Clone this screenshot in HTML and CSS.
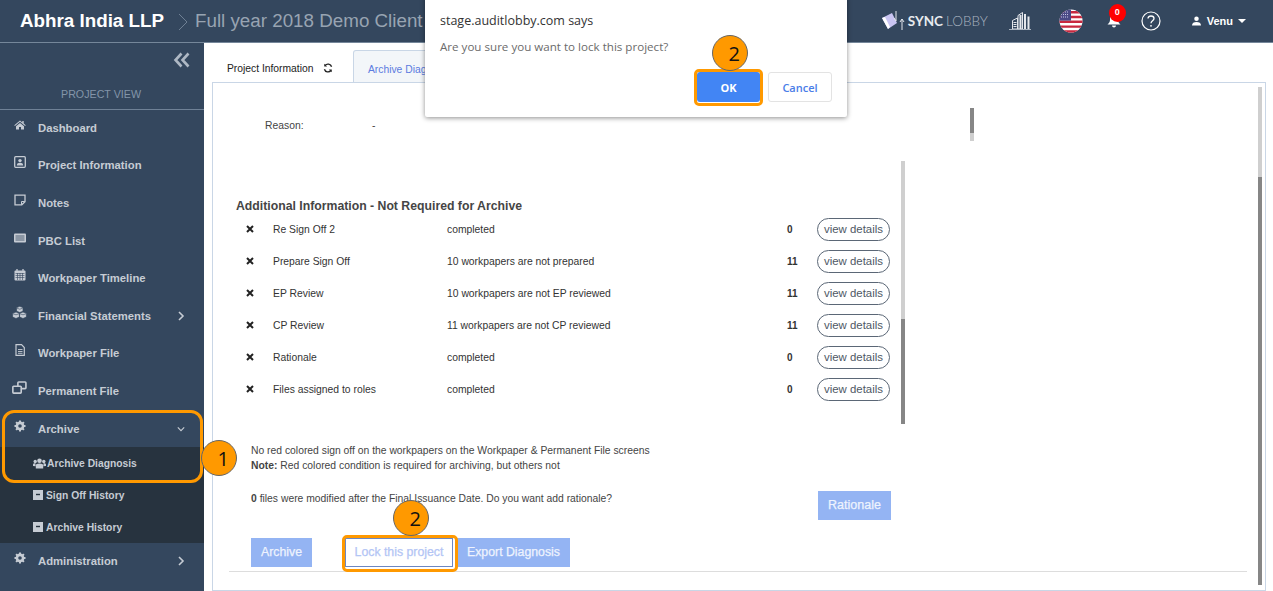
FILE: index.html

```html
<!DOCTYPE html>
<html lang="en">
<head>
    <meta charset="UTF-8">
    <meta name="viewport" content="width=device-width, initial-scale=1.0">
    <title>Archive Diagnosis</title>
    <link rel="stylesheet" href="styles.css">
</head>

<body>

<header class="topbar">
  <span class="org">Abhra India LLP</span>
  <svg class="crumb" viewBox="0 0 10 18"><path d="M1 1l8 8-8 8" fill="none" stroke="#6f8094" stroke-width="1"/></svg>
  <span class="client">Full year 2018 Demo Client</span>

  <div class="tools">
    <div class="sync">
      <svg class="sync-logo" viewBox="0 0 24 20">
        <path d="M1 7l10-5 5 10-9 6z" fill="#c9c4f2"/>
        <path d="M1 7l3-1 5 10-2 2z" fill="#fff"/>
        <path d="M15 0v10M13 7l2 3M21 8v11M19 11l2-3 2 3" fill="none" stroke="#e4e7ec" stroke-width="1"/>
      </svg>
      <span class="sync-a">SYNC</span> <span class="sync-b">LOBBY</span>
    </div>
    <svg class="tower" viewBox="0 0 22 20">
      <path d="M3.500 9.500l5-2.500v11h-5zM9 4.500l4.500-3V18H9z" fill="none" stroke="#e4e7ec" stroke-width="1"/>
      <path d="M10.500 4h2v14h-2zM15 3h2v15h-2zM18.500 5.500h2V18h-2zM4.500 11h3v1h-3zM4.500 13h3v1h-3zM4.500 15h3v1h-3z" fill="#e4e7ec"/>
      <path d="M0 18.500h22" stroke="#aab4c0" stroke-width="1"/>
    </svg>
    <svg class="flag" viewBox="0 0 24 24">
      <defs><clipPath id="round"><circle cx="12" cy="12" r="11.500"/></clipPath></defs>
      <g clip-path="url(#round)">
        <rect width="24" height="24" fill="#fff"/>
        <path d="M0 2h24v2.400H0zM0 6.800h24v2.400H0zM0 11.600h24V14H0zM0 16.400h24v2.400H0zM0 21.200h24V24H0z" fill="#c8283f"/>
        <rect width="12" height="11.600" fill="#4b4a86"/>
        <path d="M2 3h8M2 5.500h8M2 8h8" stroke="#c9c9e4" stroke-width="1" stroke-dasharray="1 1"/>
      </g>
    </svg>
    <div class="bell">
      <svg viewBox="0 0 14 14"><path d="M7 1c3 0 4 2 4 5 0 2 1 3 2.500 4.500H.5C2 9 3 8 3 6c0-3 1-5 4-5zM5 11.500h4c0 1.200-1 2-2 2s-2-.8-2-2z" fill="#fff"/></svg>
      <span class="count">0</span>
    </div>
    <svg class="help" viewBox="0 0 20 20">
      <circle cx="10" cy="10" r="9" fill="none" stroke="#fff" stroke-width="1.200"/>
      <path d="M7 7.600C7 5.800 8.400 5 10 5s3 1 3 2.600c0 2.200-3 2.200-3 4.600" fill="none" stroke="#fff" stroke-width="1.300"/>
      <circle cx="10" cy="14.800" r=".9" fill="#fff"/>
    </svg>
    <div class="user">
      <svg viewBox="0 0 10 11"><circle cx="5" cy="3" r="2.500" fill="#fff"/><path d="M0 10.500c0-3 2-4 5-4s5 1 5 4z" fill="#fff"/></svg>
      <span>Venu</span>
      <i class="caret"></i>
    </div>
  </div>
</header>

<div class="layout">
  <nav class="sidebar">
    <svg class="collapse" viewBox="0 0 18 16"><path d="M8.500 1.500L2.500 8l6 6.500M15.500 1.500L9.500 8l6 6.500" fill="none" stroke="#aeb8c4" stroke-width="2.600"/></svg>
    <div class="view-title">PROJECT VIEW</div>

    <a class="item"><svg class="ico" viewBox="0 0 12 12"><path d="M6 1.500L.3 6.300l.6.700L6 2.800 11.100 7l.6-.7-2-1.700V2H8.300v1.400zM2 7.200l4-3.300 4 3.300v3.300H7V8H5v2.500H2z" fill="#c6ccd4"/></svg>Dashboard</a>
    <a class="item"><svg class="ico" viewBox="0 0 12 12"><rect x=".7" y=".7" width="10.600" height="10.600" rx="1" fill="none" stroke="#c6ccd4" stroke-width="1.300"/><circle cx="6" cy="4.600" r="1.700" fill="#c6ccd4"/><path d="M2.800 9.500c0-2 1.400-2.700 3.200-2.700s3.200.7 3.200 2.700z" fill="#c6ccd4"/></svg>Project Information</a>
    <a class="item"><svg class="ico" viewBox="0 0 12 12"><path d="M1 1.200h10v6.500L7.800 10.800H1z" fill="none" stroke="#c6ccd4" stroke-width="1.300"/><path d="M7.500 10.500V7.500h3.300" fill="none" stroke="#c6ccd4" stroke-width="1"/></svg>Notes</a>
    <a class="item"><svg class="ico" viewBox="0 0 12 12"><rect y="1.500" width="12" height="9" rx="1" fill="#c6ccd4"/><path d="M1.500 4h9M1.500 6h9M1.500 8h9" stroke="#34475e" stroke-width=".8"/></svg>PBC List</a>
    <a class="item"><svg class="ico" viewBox="0 0 12 12"><rect x=".5" y="1.500" width="11" height="10" rx="1" fill="#c6ccd4"/><path d="M3 0v3M9 0v3" stroke="#c6ccd4" stroke-width="1.300"/><path d="M1.500 4.500h9M1.500 6.500h9M1.500 8.500h9M3.500 4v7M6 4v7M8.500 4v7" stroke="#34475e" stroke-width=".6"/></svg>Workpaper Timeline</a>
    <a class="item wide"><svg class="ico" viewBox="0 0 15 13"><path d="M7.800.3l3.200 1.300v3.600L7.800 6.500 4.600 5.200V1.600zM4 6l3.400 1.300v3.800L4 12.500.6 11.100V7.300zM11 6l3.400 1.300v3.800L11 12.500l-3.400-1.400V7.300z" fill="#c6ccd4" stroke="#34475e" stroke-width=".7"/><path d="M5 2.200l2.800 1 2.800-1M1 7.800l3 1 3-1M8 7.800l3 1 3-1" fill="none" stroke="#34475e" stroke-width=".6"/></svg>Financial Statements<svg class="arrow" viewBox="0 0 8 10"><path d="M2 1l4 4-4 4" fill="none" stroke="#c6ccd4" stroke-width="1.600"/></svg></a>
    <a class="item"><svg class="ico" viewBox="0 0 12 12"><path d="M2 .7h5.500L10.300 3.500v7.800H2z" fill="none" stroke="#c6ccd4" stroke-width="1.200"/><path d="M4 5.500h4.500M4 7.500h4.500M4 9.300h4.500" stroke="#c6ccd4" stroke-width=".9"/></svg>Workpaper File</a>
    <a class="item wide"><svg class="ico" viewBox="0 0 14 12"><rect x="5.500" y=".8" width="7.500" height="6.200" rx=".8" fill="none" stroke="#c6ccd4" stroke-width="1.500"/><rect x=".8" y="4.800" width="7.800" height="6.400" rx=".8" fill="#34475e" stroke="#c6ccd4" stroke-width="1.500"/></svg>Permanent File</a>
    <a class="item"><svg class="ico" viewBox="0 0 12 12"><use href="#cog"/></svg>Archive<svg class="arrow" viewBox="0 0 10 8"><path d="M1 2l4 4 4-4" fill="none" stroke="#c6ccd4" stroke-width="1.400"/></svg></a>
    <div class="subnav">
      <a class="sub"><svg class="subico" viewBox="0 0 13 11"><circle cx="6.500" cy="2.800" r="2.300" fill="#c6ccd4"/><circle cx="2.200" cy="3.500" r="1.700" fill="#c6ccd4"/><circle cx="10.800" cy="3.500" r="1.700" fill="#c6ccd4"/><path d="M2.800 10.500V7.500c0-1.300 1-2 3.700-2s3.700.7 3.700 2v3zM0 8V6.500c0-.8.800-1.300 2.500-1.300v3zM13 8V6.500c0-.8-.8-1.300-2.500-1.300v3z" fill="#c6ccd4"/></svg>Archive Diagnosis</a>
      <a class="sub"><svg class="subico square" viewBox="0 0 10 10"><rect width="10" height="10" fill="#c6ccd4"/><path d="M3 4.500h4" stroke="#27333f" stroke-width="1.400"/></svg>Sign Off History</a>
      <a class="sub"><svg class="subico square" viewBox="0 0 10 10"><rect width="10" height="10" fill="#c6ccd4"/><path d="M3 4.500h4" stroke="#27333f" stroke-width="1.400"/></svg>Archive History</a>
    </div>
    <a class="item item-last"><svg class="ico" viewBox="0 0 12 12"><use href="#cog"/></svg>Administration<svg class="arrow" viewBox="0 0 8 10"><path d="M2 1l4 4-4 4" fill="none" stroke="#c6ccd4" stroke-width="1.600"/></svg></a>
  </nav>

  <main class="main">
    <div class="tabs">
      <div class="tab">Project Information
        <svg class="refresh" viewBox="0 0 12 12"><path d="M10.300 4.500A4.500 4.500 0 0 0 2.500 3M1.700 7.500A4.500 4.500 0 0 0 9.500 9" fill="none" stroke="#222" stroke-width="1.700"/><path d="M1.500.8v3.400h3.400zM10.500 11.200V7.800H7.100z" fill="#222"/></svg>
      </div>
      <div class="tab tab-on">Archive Diagnosis</div>
    </div>

    <section class="panel">
      <div class="reason"><span class="reason-label">Reason:</span><span>-</span></div>

      <h4 class="extra-title">Additional Information - Not Required for Archive</h4>

      <div class="checks">
        <div class="check"><svg class="cross" viewBox="0 0 8 8"><path d="M1 1l6 6M7 1L1 7" stroke="#222" stroke-width="2"/></svg><span>Re Sign Off 2</span><span>completed</span><b>0</b><button class="details">view details</button></div>
        <div class="check"><svg class="cross" viewBox="0 0 8 8"><path d="M1 1l6 6M7 1L1 7" stroke="#222" stroke-width="2"/></svg><span>Prepare Sign Off</span><span>10 workpapers are not prepared</span><b>11</b><button class="details">view details</button></div>
        <div class="check"><svg class="cross" viewBox="0 0 8 8"><path d="M1 1l6 6M7 1L1 7" stroke="#222" stroke-width="2"/></svg><span>EP Review</span><span>10 workpapers are not EP reviewed</span><b>11</b><button class="details">view details</button></div>
        <div class="check"><svg class="cross" viewBox="0 0 8 8"><path d="M1 1l6 6M7 1L1 7" stroke="#222" stroke-width="2"/></svg><span>CP Review</span><span>11 workpapers are not CP reviewed</span><b>11</b><button class="details">view details</button></div>
        <div class="check"><svg class="cross" viewBox="0 0 8 8"><path d="M1 1l6 6M7 1L1 7" stroke="#222" stroke-width="2"/></svg><span>Rationale</span><span>completed</span><b>0</b><button class="details">view details</button></div>
        <div class="check"><svg class="cross" viewBox="0 0 8 8"><path d="M1 1l6 6M7 1L1 7" stroke="#222" stroke-width="2"/></svg><span>Files assigned to roles</span><span>completed</span><b>0</b><button class="details">view details</button></div>
      </div>

      <p class="note">No red colored sign off on the workpapers on the Workpaper &amp; Permanent File screens<br><b>Note:</b> Red colored condition is required for archiving, but others not</p>

      <div class="rationale">
        <p><b>0</b> files were modified after the Final Issuance Date. Do you want add rationale?</p>
        <button class="btn btn-rat">Rationale</button>
      </div>

      <div class="actions">
        <button class="btn btn-archive">Archive</button>
        <button class="btn btn-lock">Lock this project</button>
        <button class="btn btn-export">Export Diagnosis</button>
      </div>
      <hr class="rule">

      <i class="bar bar-mini"></i>
      <i class="bar bar-list"></i>
      <i class="bar bar-page"></i>
    </section>
  </main>
</div>

<!-- browser confirm box -->
<div class="dialog">
  <div class="dialog-title">stage.auditlobby.com says</div>
  <div class="dialog-msg">Are you sure you want to lock this project?</div>
  <div class="dialog-btns">
    <button class="dlg-ok">OK</button>
    <button class="dlg-cancel">Cancel</button>
  </div>
</div>

<!-- tutorial marks drawn on top of the screen -->
<i class="mark mark-nav"></i>
<i class="mark mark-lock"></i>
<i class="mark mark-ok"></i>
<span class="step step-nav">1</span>
<span class="step step-lock">2</span>
<span class="step step-ok">2</span>

<svg class="defs" width="0" height="0">
  <symbol id="cog" viewBox="0 0 12 12">
    <circle cx="6" cy="6" r="3.100" fill="none" stroke="#c6ccd4" stroke-width="2.600"/>
    <path d="M6 .5v2M6 9.500v2M.5 6h2M9.500 6h2M2.100 2.100l1.400 1.400M8.500 8.500l1.400 1.400M9.900 2.100L8.500 3.500M3.500 8.500L2.100 9.900" stroke="#c6ccd4" stroke-width="2"/>
  </symbol>
</svg>

</body>
</html>
```

FILE: styles.css

```css
* {
    box-sizing: border-box;
}

html, body {
    margin: 0;
    height: 591px;
    overflow: hidden;
}

body {
    position: relative;
    background: #fff;
    font-family: "Liberation Sans", Arial, sans-serif;
    font-size: 10.350px;
    color: #444;
}

.defs {
    position: absolute;
}

/* top bar */
.topbar {
    height: 43px;
    background: #34475e;
    border-bottom: 1px solid #75879a;
    display: flex;
    align-items: center;
    padding-left: 20px;
}
.org {
    font-size: 18.800px;
    font-weight: bold;
    color: #fff;
}
.crumb {
    width: 10px;
    height: 18px;
    margin: 2px 7px 0 14px;
}
.client {
    font-size: 18.800px;
    color: #98a4b2;
}
.tools {
    margin-left: auto;
    margin-right: 27px;
    display: flex;
    align-items: center;
}
.sync {
    display: flex;
    align-items: center;
    gap: 3px;
    font-family: Lato, sans-serif;
    font-size: 13.500px;
    width: 128px;
}
.sync-logo {
    width: 24px;
    height: 20px;
}
.sync-a {
    font-weight: bold;
    color: #e8ebef;
}
.sync-b {
    font-weight: 300;
    color: #aab4c0;
}
.tower {
    width: 22px;
    height: 20px;
}
.flag {
    width: 24px;
    height: 24px;
    margin-left: 28px;
}
.bell {
    position: relative;
    width: 14px;
    height: 14px;
    margin-left: 24px;
}
.bell svg {
    display: block;
    width: 14px;
    height: 14px;
}
.count {
    position: absolute;
    left: 2px;
    top: -10px;
    width: 17px;
    height: 18px;
    border-radius: 50%;
    background: #f00;
    color: #fff;
    font-size: 9px;
    font-weight: bold;
    text-align: center;
    line-height: 17px;
}
.help {
    width: 20px;
    height: 20px;
    margin-left: 20px;
}
.user {
    display: flex;
    align-items: center;
    padding-left: 31px;
    color: #fff;
    font-size: 11px;
    font-weight: bold;
}
.user svg {
    flex: none;
    width: 9px;
    height: 10px;
    margin-right: 6px;
}
.caret {
    margin-left: 5px;
    border: 4px solid transparent;
    border-top-color: #fff;
    border-bottom: 0;
}

.layout {
    display: flex;
    height: 548px;
}

/* left nav */
.sidebar {
    width: 204px;
    background: #34475e;
    padding-top: 9px;
}
.collapse {
    display: block;
    width: 18px;
    height: 16px;
    margin-left: 173px;
}
.view-title {
    height: 41px;
    padding: 20px 2px 0 0;
    text-align: center;
    font-size: 10.700px;
    color: #8395a9;
    box-shadow: 0 1px 0 #6f8196;
}
.item {
    display: flex;
    align-items: center;
    height: 37.600px;
    padding: 0 19px 0 14px;
    color: #c6ccd4;
    font-size: 11.300px;
    font-weight: bold;
}
.item-last {
    height: 36px;
}
.ico {
    flex: none;
    width: 12px;
    height: 12px;
    margin: -6px 12px 0 0;
}
.wide .ico {
    width: 15px;
    height: 13px;
    margin: -6px 11px 0 -2px;
}
.arrow {
    width: 8px;
    height: 10px;
    margin-left: auto;
}
.subnav {
    background: #27333f;
    height: 96px;
}
.sub {
    display: flex;
    align-items: center;
    height: 32px;
    padding-left: 33px;
    color: #c6ccd4;
    font-size: 10.300px;
    font-weight: bold;
}
.subico {
    width: 13px;
    height: 11px;
    margin-right: 1px;
}
.square {
    width: 10px;
    height: 10px;
    margin-right: 3px;
}

/* main area */
.main {
    flex: 1;
    padding: 7px 7px 0 8px;
}
.tabs {
    display: flex;
    height: 32px;
}
.tab {
    width: 141px;
    padding: 13px 0 0 15px;
    font-size: 10.300px;
    color: #222;
}
.refresh {
    width: 10px;
    height: 10px;
    margin: 0 0 -1px 7px;
}
.tab-on {
    width: 100px;
    padding-left: 14px;
    border: 1px solid #c9d6e6;
    border-bottom: 0;
    border-radius: 3px 0 0 0;
    background: #f3f6f9;
    color: #5b7be0;
}

.panel {
    position: relative;
    height: 509px;
    border: 1px solid #c9d6e6;
    overflow: hidden;
}
.reason {
    display: flex;
    margin: 35px 0 0 52px;
    line-height: 16px;
}
.reason-label {
    width: 107px;
}
.extra-title {
    margin: 64px 0 0 23px;
    font-size: 12.250px;
    line-height: 16px;
    font-weight: bold;
    color: #454545;
}
.checks {
    margin: -1px 0 0 33px;
}
.check {
    display: grid;
    grid-template-columns: 27px 174px 340px 30px 73px;
    align-items: center;
    height: 32px;
    color: #333;
}
.check b {
    font-size: 10px;
}
.cross {
    width: 8px;
    height: 8px;
}
.details {
    width: 73px;
    height: 23px;
    padding: 0 0 1px;
    border: 1px solid #5b6776;
    border-radius: 12px;
    background: #fff;
    font-family: "Liberation Sans", Arial, sans-serif;
    font-size: 11.400px;
    color: #4e5865;
}
.note {
    margin: 38px 0 0 38px;
    line-height: 15px;
}
.rationale {
    display: grid;
    grid-template-columns: 567px 73px;
    margin: 18px 0 0 38px;
}
.rationale p {
    margin: 0;
    line-height: 15px;
}
.btn {
    height: 29px;
    padding: 0 0 2px;
    border: 0;
    background: #94b4f3;
    color: #eef3fe;
    font-family: "Liberation Sans", Arial, sans-serif;
    font-size: 12.300px;
    -webkit-text-stroke: .25px;
}
.btn-rat {
    font-size: 12.500px;
}
.actions {
    display: flex;
    margin: 18px 0 0 38px;
}
.btn-archive {
    width: 61px;
    margin-right: 33px;
}
.btn-lock {
    width: 108px;
    margin-right: 4px;
    border: 1px solid #6c87c2;
    background: #fff;
    color: #b3c5f5;
}
.btn-export {
    width: 113px;
}
.rule {
    margin: 4px 18px 0 16px;
    border: 0;
    border-top: 1px solid #ddd;
}

/* scroll bars */
.bar {
    position: absolute;
    width: 4px;
    background: #cfcfcf;
}
.bar-mini {
    left: 757px;
    top: 25px;
    height: 33px;
    background: linear-gradient(#868686 75%, #cfcfcf 75%);
}
.bar-list {
    left: 688px;
    top: 78px;
    height: 263px;
    background: linear-gradient(#cfcfcf 60%, #868686 60%);
}
.bar-page {
    left: 1045px;
    top: 4px;
    height: 498px;
    background: linear-gradient(#cfcfcf 18%, #868686 18%);
}

/* confirm box */
.dialog {
    position: absolute;
    left: 425px;
    top: -4px;
    width: 422px;
    height: 121px;
    padding: 15px 15px 0;
    background: #fff;
    border-radius: 2px;
    box-shadow: 0 1px 5px rgba(0, 0, 0, .45);
    font-family: "Open Sans", sans-serif;
}
.dialog-title {
    font-size: 12.500px;
    line-height: 20px;
    color: #333;
}
.dialog-msg {
    margin-top: 6px;
    font-size: 11.600px;
    line-height: 20px;
    color: #6b6b6b;
}
.dialog-btns {
    display: flex;
    justify-content: flex-end;
    gap: 8px;
    margin-top: 15px;
}
.dlg-ok, .dlg-cancel {
    width: 63px;
    height: 30px;
    padding: 0;
    border: 0;
    border-radius: 3px;
    background: #4285f4;
    color: #fff;
    font-family: "Open Sans", sans-serif;
    font-size: 11px;
    font-weight: bold;
}
.dlg-cancel {
    width: 64px;
    border: 1px solid #e3e3e3;
    background: #fff;
    color: #4a7de8;
    font-weight: 600;
}

/* orange marks */
.mark {
    position: absolute;
    border: 3px solid #f90;
    border-radius: 5px;
}
.mark-nav {
    left: 2px;
    top: 410px;
    width: 201px;
    height: 73px;
    border-radius: 12px;
}
.mark-lock {
    left: 342px;
    top: 535px;
    width: 116px;
    height: 37px;
}
.mark-ok {
    left: 694px;
    top: 69px;
    width: 69px;
    height: 37px;
}
.step {
    position: absolute;
    width: 36px;
    height: 36px;
    border: 1px solid #666;
    border-radius: 50%;
    background: #f90;
    color: #111;
    font-family: "Open Sans", sans-serif;
    font-size: 20px;
    line-height: 36px;
    text-align: right;
    padding-right: 7px;
}
.step-nav {
    left: 201px;
    top: 440px;
}
.step-lock {
    left: 393px;
    top: 500px;
}
.step-ok {
    left: 712px;
    top: 35px;
}
```
